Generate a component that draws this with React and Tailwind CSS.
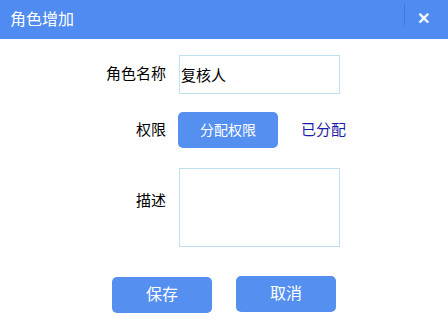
import React from 'react'

const font = { fontFamily: '"Liberation Sans", "Noto Sans CJK SC", sans-serif' }

const Row = ({ label, children, className = '' }) => (
    <div className={`flex items-center ${className}`}>
        <div className="w-[166px] text-right text-[15px] text-black">{label}</div>
        <div className="ml-[13px] flex items-center">{children}</div>
    </div>
)

const App = () => {
    return (
        <div className="w-[448px] h-[336px] bg-white" style={font}>
            <div className="flex h-[39px] items-center bg-[#4f8bf0] pl-[10px]">
                <span className="text-[16px] text-white">角色增加</span>
                <div className="ml-auto h-[21px] w-px bg-[#3f77d8] mb-[10px]" />
                <span className="ml-[12px] mr-[18px] mb-[1px] text-[16px] font-bold text-[#f4f8ff]">✕</span>
            </div>

            <Row label="角色名称" className="mt-[16px]">
                <input
                    className="h-[39px] w-[161px] border border-[#bfe0ec] px-[1px] text-[15px] text-black outline-none"
                    defaultValue="复核人"
                />
            </Row>

            <Row label="权限" className="mt-[18px]">
                <button className="-ml-[1px] h-[36px] w-[100px] rounded-[5px] bg-[#5590f0] text-[14px] text-white">分配权限</button>
                <span className="ml-[23px] text-[15px] text-[#1c1ca8]">已分配</span>
            </Row>

            <div className="mt-[20px] flex">
                <div className="w-[166px] pt-[22px] text-right text-[15px] text-black">描述</div>
                <textarea className="ml-[13px] h-[79px] w-[161px] resize-none border border-[#bfe0ec] outline-none" />
            </div>

            <div className="mt-[30px] flex pl-[112px] gap-[24px]">
                <button className="h-[36px] w-[100px] rounded-[5px] bg-[#5590f0] text-[16px] text-white">保存</button>
                <button className="-mt-[1px] h-[36px] w-[100px] rounded-[5px] bg-[#5590f0] text-[16px] text-white">取消</button>
            </div>
        </div>
    )
}

export default App
